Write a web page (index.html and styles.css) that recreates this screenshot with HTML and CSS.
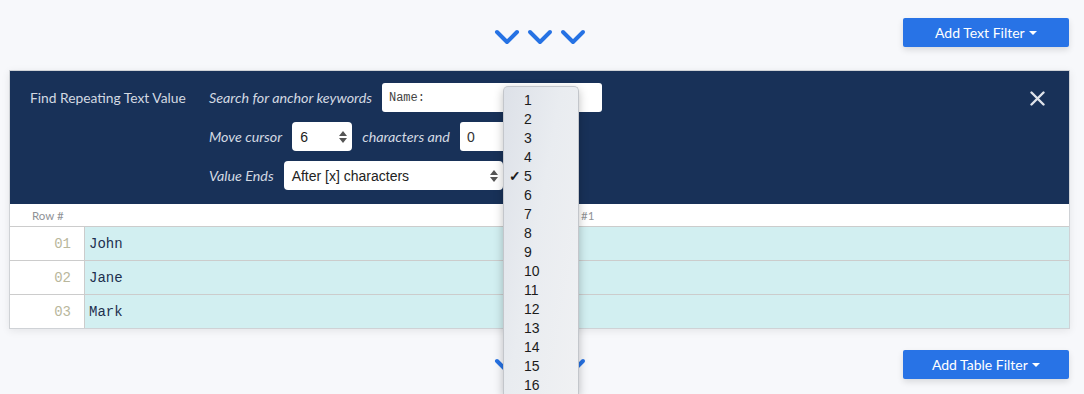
FILE: index.html
```html
<!DOCTYPE html>
<html lang="en">
<head>
  <meta charset="UTF-8" />
  <title>Find Repeating Text Value</title>
  <link rel="stylesheet" href="styles.css">
</head>
<body>
  <div class="page">
    <div class="toolbar">
      <div></div>
      <div class="chevrons">
        <svg width="26" height="16" viewBox="0 0 26 16"><polyline points="3,3 13,13 23,3"/></svg>
        <svg width="26" height="16" viewBox="0 0 26 16"><polyline points="3,3 13,13 23,3"/></svg>
        <svg width="26" height="16" viewBox="0 0 26 16"><polyline points="3,3 13,13 23,3"/></svg>
      </div>
      <button class="add-btn">Add Text Filter <span class="caret"></span></button>
    </div>

    <div class="card">
      <div class="filter">
        <div class="filter-title">Find Repeating Text Value</div>
        <div class="filter-form">
          <div class="form-row">
            <label>Search for anchor keywords</label>
            <input class="text-input mono wide" type="text" value="Name:">
          </div>
          <div class="form-row">
            <label>Move cursor</label>
            <div class="select-box small">
              <span>6</span>
              <svg width="8" height="12" viewBox="0 0 8 12"><path d="M4 0 L8 5 L0 5 Z M0 7 L8 7 L4 12 Z"/></svg>
            </div>
            <label>characters and</label>
            <input class="text-input small" type="text" value="0">
          </div>
          <div class="form-row">
            <label>Value Ends</label>
            <div class="select-box large">
              <span>After [x] characters</span>
              <svg width="8" height="12" viewBox="0 0 8 12"><path d="M4 0 L8 5 L0 5 Z M0 7 L8 7 L4 12 Z"/></svg>
            </div>
          </div>
        </div>
        <svg class="close" width="15" height="15" viewBox="0 0 15 15"><path d="M1.5 1.5 L13.5 13.5 M13.5 1.5 L1.5 13.5"/></svg>
      </div>

      <table class="data">
        <tr class="head">
          <th class="num-col">Row #</th>
          <th class="val-col">Column #1</th>
        </tr>
        <tr>
          <td class="num-col">01</td>
          <td class="val-col">John</td>
        </tr>
        <tr>
          <td class="num-col">02</td>
          <td class="val-col">Jane</td>
        </tr>
        <tr>
          <td class="num-col">03</td>
          <td class="val-col">Mark</td>
        </tr>
      </table>
    </div>

    <div class="toolbar bottom">
      <div></div>
      <div class="chevrons">
        <svg width="26" height="16" viewBox="0 0 26 16"><polyline points="3,3 13,13 23,3"/></svg>
        <svg width="26" height="16" viewBox="0 0 26 16"><polyline points="3,3 13,13 23,3"/></svg>
        <svg width="26" height="16" viewBox="0 0 26 16"><polyline points="3,3 13,13 23,3"/></svg>
      </div>
      <button class="add-btn">Add Table Filter <span class="caret"></span></button>
    </div>
  </div>

  <ul class="dropdown">
    <li>1</li>
    <li>2</li>
    <li>3</li>
    <li>4</li>
    <li class="checked">5</li>
    <li>6</li>
    <li>7</li>
    <li>8</li>
    <li>9</li>
    <li>10</li>
    <li>11</li>
    <li>12</li>
    <li>13</li>
    <li>14</li>
    <li>15</li>
    <li>16</li>
  </ul>
</body>
</html>
```

FILE: styles.css
```css
html, body {
  height: 394px;
  overflow: hidden;
}
body {
  font-family: 'Lato', 'Open Sans', sans-serif;
  background: #f7f8fb;
  margin: 0;
  padding: 0;
}
.page {
  width: 1061px;
  margin-left: 9px;
}
.toolbar {
  display: grid;
  grid-template-columns: 1fr auto 1fr;
  align-items: start;
  height: 70px;
  padding-top: 18px;
  box-sizing: border-box;
}
.toolbar.bottom {
  padding-top: 21px;
  height: 66px;
}
.chevrons {
  display: flex;
  gap: 7px;
  margin-top: 11px;
}
.toolbar.bottom .chevrons {
  margin-top: 8px;
}
.chevrons polyline {
  fill: none;
  stroke: #2672e4;
  stroke-width: 4;
  stroke-linecap: round;
  stroke-linejoin: round;
}
.add-btn {
  justify-self: end;
  margin-right: 1px;
  width: 166px;
  height: 29px;
  background: #2873e6;
  color: #fff;
  border: none;
  border-radius: 2px;
  font-family: 'Lato', sans-serif;
  font-size: 14px;
  box-shadow: 0 3px 6px rgba(0,0,0,0.12);
  cursor: pointer;
}
.caret {
  display: inline-block;
  width: 0;
  height: 0;
  border-left: 4px solid transparent;
  border-right: 4px solid transparent;
  border-top: 4px solid #fff;
  vertical-align: 3px;
  margin-left: 1px;
}
.card {
  border: 1px solid #cfd2d6;
  box-shadow: 0 2px 8px rgba(0,0,0,0.08);
  background: #fff;
}
.filter {
  display: flex;
  align-items: flex-start;
  background: #183158;
  padding: 12px 24px 14px 20px;
  height: 133px;
  box-sizing: border-box;
}
.filter-title {
  width: 179px;
  flex-shrink: 0;
  color: #d3d9e2;
  font-size: 13.8px;
  line-height: 29px;
}
.filter-form {
  display: flex;
  flex-direction: column;
  gap: 10px;
  flex: 1;
}
.form-row {
  display: flex;
  align-items: center;
  gap: 10px;
  height: 29px;
}
.form-row label {
  color: #d3d9e2;
  font-style: italic;
  font-size: 14.3px;
}
.text-input {
  height: 29px;
  box-sizing: border-box;
  border: none;
  border-radius: 3px;
  background: #fff;
  padding: 0 7px;
  font-family: 'Liberation Sans', Arial, sans-serif;
  font-size: 14px;
  color: #333;
  margin: 0;
}
.text-input.mono {
  font-family: 'Liberation Mono', monospace;
  font-size: 12px;
  color: #444;
}
.text-input.wide {
  width: 220px;
}
.text-input.small {
  width: 60px;
}
.select-box {
  display: flex;
  align-items: center;
  justify-content: space-between;
  height: 29px;
  box-sizing: border-box;
  background: #fff;
  border-radius: 4px;
  padding: 0 5px 0 8px;
  font-family: 'Liberation Sans', Arial, sans-serif;
  font-size: 14px;
  color: #222;
}
.select-box svg path {
  fill: #555;
}
.select-box.small {
  width: 60px;
}
.select-box.large {
  width: 219px;
}
.close {
  margin-top: 8px;
}
.close path {
  stroke: #dfe3ea;
  stroke-width: 2.4;
  stroke-linecap: round;
}
.data {
  width: 100%;
  border-collapse: collapse;
}
.data th {
  height: 22px;
  padding: 0;
  font-size: 11.5px;
  font-weight: normal;
  color: #8f9296;
}
.data th.num-col {
  text-align: left;
  padding-left: 22px;
}
.data th.val-col {
  text-align: center;
  padding-right: 20px;
}
.data td {
  height: 33px;
  border-top: 1px solid #cccccc;
  font-family: 'Liberation Mono', monospace;
  font-size: 14px;
  padding: 0;
}
.data td.num-col {
  width: 61px;
  padding-right: 13px;
  text-align: right;
  color: #b9b79c;
  border-right: 1px solid #cccccc;
  background: #fff;
}
.data td.val-col {
  background: #d2eff1;
  color: #1d2f4f;
  padding-left: 4px;
}
.dropdown {
  position: absolute;
  left: 503px;
  top: 86px;
  width: 76px;
  height: 308px;
  overflow: hidden;
  margin: 0;
  padding: 4px 0 0;
  list-style: none;
  background: linear-gradient(100deg, #dde1e8 0%, #e9ecf0 45%, #f0f1f3 100%);
  border: 1px solid #c3c6cb;
  border-bottom: none;
  border-radius: 5px 5px 0 0;
  box-shadow: 0 3px 10px rgba(0,0,0,0.25);
  box-sizing: border-box;
  font-family: 'Liberation Sans', Arial, sans-serif;
  font-size: 14px;
  color: #1c1c1c;
}
.dropdown li {
  height: 19px;
  line-height: 19px;
  padding-left: 20px;
  position: relative;
}
.dropdown li.checked::before {
  content: "\2713";
  position: absolute;
  left: 5px;
  font-weight: bold;
}
```
